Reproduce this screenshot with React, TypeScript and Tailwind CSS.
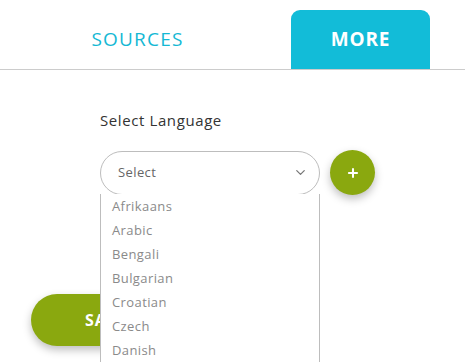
import { ChevronDown, Plus } from "lucide-react";

const languages = ["Afrikaans", "Arabic", "Bengali", "Bulgarian", "Croatian", "Czech", "Danish"];

export default function App() {
  return (
    <div
      className="h-[362px] w-[465px] overflow-hidden bg-white"
      style={{ fontFamily: '"Open Sans", "Liberation Sans", sans-serif' }}
    >
      {/* tab bar */}
      <div className="flex h-[70px] items-end border-b border-[#cccccc]">
        <div className="ml-[68px] flex h-[59px] w-[139px] items-center justify-center pb-[1px] text-[19px] font-medium tracking-[1.2px] text-[#14b8d4]">
          SOURCES
        </div>
        <div className="ml-[84px] flex h-[59px] w-[139px] items-center justify-center rounded-t-[9px] bg-[#12bcd8] pb-[1px] text-[19px] font-bold tracking-[0.8px] text-white">
          MORE
        </div>
      </div>

      <div className="relative">
        <div className="pl-[100px] pt-[40px]">
          <div className="text-[15px] leading-5 tracking-[0.6px] text-[#333333]">Select Language</div>
          <div className="mt-[20px] flex items-center">
            <div className="relative w-[220px]">
              <div className="flex h-[44px] items-center justify-between rounded-full border border-[#bdbdbd] bg-white pl-[17px] pr-[11px] text-[13px] tracking-[0.4px] text-[#666666]">
                <span>Select</span>
                <ChevronDown size={15} strokeWidth={2} className="text-[#777777]" />
              </div>
              {/* open list */}
              <ul className="absolute left-0 top-[43px] z-10 h-[200px] w-[220px] border-x border-[#bdbdbd] bg-white pl-[11px] text-[13px] tracking-[0.4px] text-[#8a8a8a]">
                {languages.map((l) => (
                  <li key={l} className="h-6 leading-6">
                    {l}
                  </li>
                ))}
              </ul>
            </div>
            <button className="ml-[10px] flex h-[45px] w-[45px] items-center justify-center rounded-full bg-[#8aa80f] text-white shadow-[0_4px_8px_rgba(0,0,0,0.25)]">
              <Plus size={14} strokeWidth={3.5} />
            </button>
          </div>
        </div>

        <button className="ml-[31px] mt-[99px] flex h-[52px] w-[180px] items-center rounded-full bg-[#8aa80f] pl-[54px] text-[16px] font-bold tracking-[1px] text-white shadow-[0_4px_8px_rgba(0,0,0,0.25)]">
          SAVE
        </button>
      </div>
    </div>
  );
}
